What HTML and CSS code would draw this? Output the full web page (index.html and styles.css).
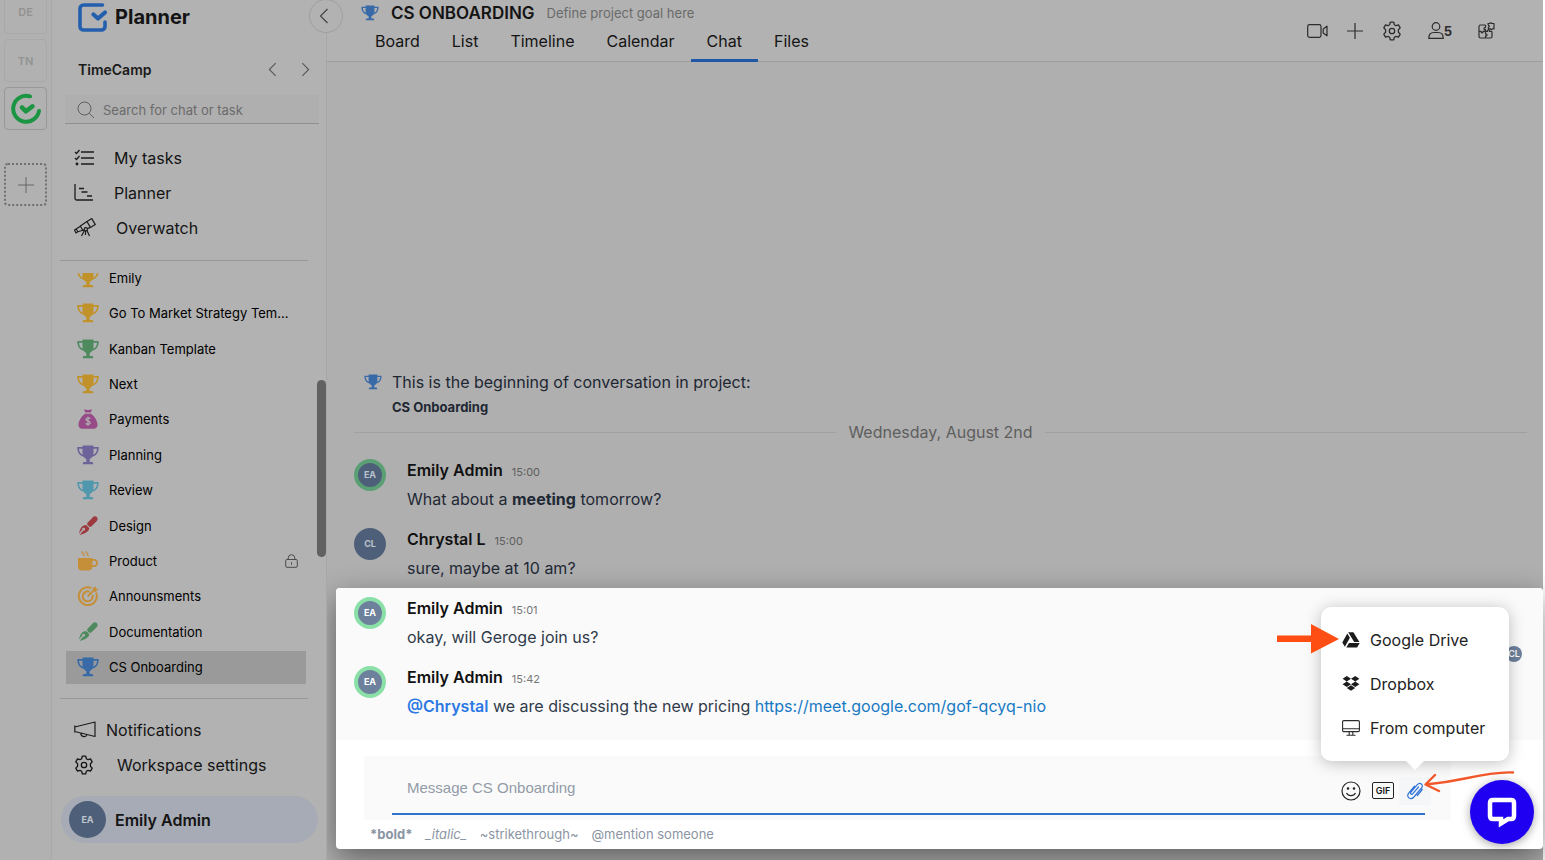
FILE: index.html
```html
<!DOCTYPE html>
<html lang="en">
<head>
  <meta charset="UTF-8" />
  <meta name="viewport" content="width=device-width, initial-scale=1.0"/>
  <title>CS Onboarding - Planner</title>
  <link rel="stylesheet" href="styles.css">
</head>
<body>

  <!-- shared icons -->
  <svg class="sprite" aria-hidden="true">
    <symbol id="trophy" viewBox="0 0 22 20">
      <path d="M5.500 .5h11v1.600h5.200c.2 5.200-2.100 8.600-6.400 9.700-.8 1.200-1.700 1.900-2.600 2.200v3h2.200c.8 0 1.300.6 1.300 1.300v.9H5.800v-.9c0-.7.500-1.300 1.300-1.300h2.200v-3c-.9-.3-1.800-1-2.600-2.200C2.400 10.700.1 7.300.3 2.100h5.200zM2 3.800c.2 2.900 1.300 4.900 3.700 5.900-.3-1.600-.3-3.500-.2-5.900zm18 0h-3.500c.1 2.400.1 4.300-.2 5.900 2.400-1 3.500-3 3.700-5.900z" fill="currentColor" fill-rule="evenodd"/>
    </symbol>
    <symbol id="brush" viewBox="0 0 20 20">
      <path d="M18.800 1.100c-1.200-1.200-2.800-.9-4 .2L9.600 6.800c-.7.800-.6 1.500 0 2.200l1.500 1.500c.7.600 1.400.7 2.200 0l5.300-5.300c1.200-1.200 1.400-2.900.2-4.100z" fill="currentColor"/>
      <path d="M8.300 8.900 11.200 12c-.2 3.200-2.300 4.800-9.600 6.900l3.600-4.400a1.400 1.400 0 1 0-.9-.9L.9 17.500C2.400 11.300 4.300 9 8.300 8.900z" fill="currentColor"/>
    </symbol>
    <symbol id="gear" viewBox="0 0 20 20">
      <path d="M8.300 1.200h3.400l.6 2.500 1.800 1 2.400-.8 1.700 3-1.800 1.800v2.600l1.800 1.800-1.700 3-2.400-.8-1.800 1-.6 2.500H8.300l-.6-2.500-1.800-1-2.400.8-1.700-3 1.800-1.800V8.700L1.800 6.900l1.700-3 2.400.8 1.800-1z" fill="none" stroke="currentColor" stroke-width="1.300" stroke-linejoin="round"/>
      <circle cx="10" cy="10" r="2.700" fill="none" stroke="currentColor" stroke-width="1.300"/>
    </symbol>
    <symbol id="chev" viewBox="0 0 10 16">
      <path d="M8.500 1 1.500 8l7 7" fill="none" stroke="currentColor" stroke-width="1.200"/>
    </symbol>
  </svg>

  <div class="rail">
    <button class="space cut">DE</button>
    <button class="space">TN</button>
    <button class="space current" aria-label="TimeCamp">
      <svg width="32" height="32" viewBox="0 0 32 32" fill="none" stroke="#1c9543" stroke-linecap="round">
        <path d="M20 3.300A13 13 0 1 0 29 18" stroke-width="4"/>
        <path d="m12 14.500 4 3.800 6.500-5" stroke-width="4.500" stroke-linejoin="round"/>
      </svg>
    </button>
    <button class="space add" aria-label="Add workspace">
      <svg width="16" height="16" viewBox="0 0 16 16" stroke="#666" fill="none"><path d="M8 0v16M0 8h16"/></svg>
    </button>
  </div>

  <aside class="sidebar">
    <div class="logo">
      <svg width="29" height="29" viewBox="0 0 29 29" fill="none" stroke="#245fae" stroke-linecap="round" stroke-linejoin="round">
        <path d="M24.500 2H5.500A3.500 3.500 0 0 0 2 5.500v18A3.500 3.500 0 0 0 5.500 27h18a3.500 3.500 0 0 0 3.500-3.500V19" stroke-width="3.600"/>
        <path d="m15.500 11.500 4.500 4 7-6" stroke-width="4.200"/>
      </svg>
      <span>Planner</span>
    </div>
    <button class="collapse" aria-label="Collapse sidebar"><svg width="10" height="16"><use href="#chev"/></svg></button>

    <div class="workspace">
      <b>TimeCamp</b>
      <button aria-label="Previous"><svg width="9" height="15"><use href="#chev"/></svg></button>
      <button class="next" aria-label="Next"><svg width="9" height="15"><use href="#chev"/></svg></button>
    </div>

    <label class="search">
      <svg width="18" height="18" viewBox="0 0 18 18" fill="none" stroke="#606060"><circle cx="7.500" cy="7.500" r="6.500"/><path d="m12.300 12.300 4.700 4.700"/></svg>
      <input type="text" placeholder="Search for chat or task" aria-label="Search for chat or task">
    </label>

    <nav class="menu">
      <a href="#"><svg width="20" height="17" viewBox="0 0 20 17" fill="none" stroke="#1c1c1c" stroke-width="1.300"><path d="M7 3h13M7 9h13M7 15h13M1 3l1.500 1.500L5.500 1M1 9l1.500 1.500L5.500 7"/><circle cx="3" cy="15" r=".8" fill="#1c1c1c"/></svg>My tasks</a>
      <a href="#"><svg width="20" height="17" viewBox="0 0 20 17" fill="none" stroke="#1c1c1c" stroke-width="1.300"><path d="M1 0v14.500Q1 16 2.500 16H19M5 4.500h5M7.500 8h6M13 12h5"/></svg>Planner</a>
      <a href="#"><svg width="22" height="19" viewBox="0 0 22 19" fill="none" stroke="#1c1c1c" stroke-width="1.200" stroke-linejoin="round"><path d="m13 3.500 4.800-2.900 3.500 6-4.900 2.800zM13 3.500 6.300 8l2.600 4.500 7.500-3.100M6.300 8.300 2.200 11l1.600 2.800 5-1.500M2.200 11l-1.700 1 1.500 3 1.800-1.200M11 11.500 7.500 18M12.500 11.500 15.500 18M11.500 12v5"/><circle cx="11.800" cy="11.300" r="1.600" fill="#b2b2b2"/></svg>Overwatch</a>
    </nav>

    <div class="projects">
      <ul>
        <li><a href="#"><svg class="c-gold"><use href="#trophy"/></svg><span>Emily</span></a></li>
        <li><a href="#"><svg class="c-gold"><use href="#trophy"/></svg><span>Go To Market Strategy Tem...</span></a></li>
        <li><a href="#"><svg class="c-green"><use href="#trophy"/></svg><span>Kanban Template</span></a></li>
        <li><a href="#"><svg class="c-gold"><use href="#trophy"/></svg><span>Next</span></a></li>
        <li><a href="#"><svg class="c-pink" viewBox="0 0 22 20"><path d="M7 .3c2.500.8 5.500.8 8 0L13.800 3.500H8.200zM8 4.800h6c3.500 2.500 6.500 7 6.500 11 0 2.500-1.500 4-4 4h-11c-2.500 0-4-1.500-4-4 0-4 3-8.500 6.500-11z" fill="currentColor"/><path d="M13.300 9.700c-1-1.200-4.500-1-4.400.8.100 1.900 4.400 1.100 4.400 3.200 0 1.900-3.600 2-4.700.6M11 7.700v9" stroke="#b2b2b2" stroke-width="1.200" fill="none"/></svg><span>Payments</span></a></li>
        <li><a href="#"><svg class="c-violet"><use href="#trophy"/></svg><span>Planning</span></a></li>
        <li><a href="#"><svg class="c-cyan"><use href="#trophy"/></svg><span>Review</span></a></li>
        <li><a href="#"><svg class="c-red"><use href="#brush"/></svg><span>Design</span></a></li>
        <li><a href="#"><svg class="c-orange" viewBox="0 0 22 20"><path d="M1 7h14.500v1H17c2.500 0 4 1.500 4 4s-1.700 4-4 4h-1.600c-.3 2-1.600 3.500-3.600 3.500H4.700C2.300 19.500 1 18 1 15.500zm14.500 2.700v4.500H17c1.300 0 2.100-.9 2.100-2.200S18.300 9.700 17 9.700z" fill="currentColor" fill-rule="evenodd"/><path d="M5 .3c0 2.500 2.200 2 2.200 5M9 .3c0 2.500 2.200 2 2.200 5" stroke="currentColor" stroke-width="1.300" fill="none"/></svg><span>Product</span>
          <svg class="lock" viewBox="0 0 13 14" fill="none" stroke="#4c4c4c"><rect x=".7" y="5.500" width="11.600" height="7.800" rx="1.200"/><path d="M3.200 5.500V4a3.300 3.300 0 0 1 6.600 0v1.500M6.500 8.300v2.400"/></svg></a></li>
        <li><a href="#"><svg class="c-orange" viewBox="0 0 22 20" fill="none" stroke="currentColor" stroke-width="2"><path d="M14.500 2A9 9 0 1 0 19 6.500M12.500 5.700A5 5 0 1 0 15.500 9M10.800 10.200l5-5"/><path d="M15.500 2.500 18.500.2l.5 2.300 2.200.5-2.500 3-3-.4z" fill="currentColor" stroke="none"/></svg><span>Announsments</span></a></li>
        <li><a href="#"><svg class="c-green"><use href="#brush"/></svg><span>Documentation</span></a></li>
        <li><a href="#" class="selected"><svg class="c-blue"><use href="#trophy"/></svg><span>CS Onboarding</span></a></li>
      </ul>
    </div>
    <div class="thumb"></div>

    <nav class="menu bottom">
      <a href="#" class="near"><svg width="22" height="17" viewBox="0 0 22 17" fill="none" stroke="#1c1c1c" stroke-width="1.200" stroke-linejoin="round"><path d="M.8 4.500v7M.8 6 21 1v14.500L.8 10.500M6.800 12c0 4.500 5.500 4.500 6 1.500"/></svg>Notifications</a>
      <a href="#" class="far"><svg width="20" height="20"><use href="#gear"/></svg>Workspace settings</a>
    </nav>

    <button class="user"><span class="face">EA</span>Emily Admin</button>
  </aside>

  <main class="main">
    <header class="header">
      <div class="heading">
        <div class="title">
          <svg class="c-blue" width="18" height="16"><use href="#trophy"/></svg>
          <h1>CS ONBOARDING</h1>
          <span>Define project goal here</span>
        </div>
        <nav class="tabs">
          <a href="#">Board</a>
          <a href="#">List</a>
          <a href="#">Timeline</a>
          <a href="#">Calendar</a>
          <a href="#" class="active">Chat</a>
          <a href="#">Files</a>
        </nav>
      </div>
      <div class="tools">
        <div class="actions">
          <button aria-label="Video call"><svg width="21" height="14" viewBox="0 0 21 14" fill="none" stroke="#2c2c2c" stroke-width="1.200" stroke-linejoin="round"><rect x=".7" y=".7" width="13.300" height="12.600" rx="1.800"/><path d="m16.200 5 3.800-2.800v9.600L16.200 9z"/></svg></button>
          <button aria-label="Add"><svg width="16" height="16" viewBox="0 0 16 16" stroke="#2c2c2c" stroke-width="1.200"><path d="M8 0v16M0 8h16"/></svg></button>
          <button aria-label="Settings"><svg width="20" height="20"><use href="#gear"/></svg></button>
        </div>
        <button class="people" aria-label="5 people"><svg width="16" height="17" viewBox="0 0 16 17" fill="none" stroke="#2c2c2c" stroke-width="1.200"><circle cx="8" cy="4.500" r="3.800"/><path d="M.8 16.300c0-4 2-5.800 5-5.800h4.400c3 0 5 1.800 5 5.800z"/></svg>5</button>
        <button aria-label="Integrations"><svg width="17" height="17" viewBox="0 0 17 17" fill="none" stroke="#2c2c2c" stroke-width="1.200" stroke-linejoin="round"><path d="M7.500 3H2.500Q1 3 1 4.500v10Q1 16 2.500 16h10q1.500 0 1.500-1.500v-5M1 9.300h2.200c-.8 2 2.500 2 1.800 0h2.500V7.500c-2 .7-2-2.400 0-1.800V3M7.500 16v-2.200c2 .7 2-2.400 0-1.800V9.300h2c-.8-1.800 2.500-1.800 1.800 0H14M10 1.500h2c-.4-1 2-1 1.600 0H16v5.300h-2c.4 1-2 1-1.600 0h-2V5c1.200.3 1.200-1.900 0-1.500z"/></svg></button>
      </div>
    </header>

    <section class="history">
      <div class="intro">
        <svg class="c-blue" width="18" height="16"><use href="#trophy"/></svg>
        <div>
          <p>This is the beginning of conversation in project:</p>
          <b>CS Onboarding</b>
        </div>
      </div>
      <div class="date">Wednesday, August 2nd</div>
      <article class="message">
        <span class="avatar online">EA</span>
        <div><h2>Emily Admin <time>15:00</time></h2><p>What about a <b>meeting</b> tomorrow?</p></div>
      </article>
      <article class="message">
        <span class="avatar">CL</span>
        <div><h2>Chrystal L <time>15:00</time></h2><p>sure, maybe at 10 am?</p></div>
      </article>
    </section>

    <section class="spotlight">
      <div class="recent">
        <article class="message">
          <span class="avatar online">EA</span>
          <div><h2>Emily Admin <time>15:01</time></h2><p>okay, will Geroge join us?</p></div>
          <span class="seen">CL</span>
        </article>
        <article class="message">
          <span class="avatar online">EA</span>
          <div><h2>Emily Admin <time>15:42</time></h2><p><b class="mention">@Chrystal</b> we are discussing the new pricing <a href="#">https://meet.google.com/gof-qcyq-nio</a></p></div>
        </article>
      </div>

      <div class="compose">
        <div class="field">
          <input type="text" placeholder="Message CS Onboarding" aria-label="Message CS Onboarding">
          <button aria-label="Emoji"><svg width="20" height="20" viewBox="0 0 20 20" fill="none" stroke="#222" stroke-width="1.200"><circle cx="10" cy="10" r="9"/><path d="M5.500 12c1.800 3.500 7.200 3.500 9 0"/><circle cx="7" cy="7.500" r=".7" fill="#222"/><circle cx="13" cy="7.500" r=".7" fill="#222"/></svg></button>
          <button aria-label="GIF"><span class="gif">GIF</span></button>
          <div class="attach">
            <button aria-label="Attach file"><svg width="17" height="19" viewBox="0 0 17 19" fill="none" stroke="#2f73d8" stroke-width="1.200" stroke-linecap="round"><path d="m11.500 6-5.600 6.600c-1.300 1.500-3.100 0-1.900-1.500l6.300-7.400c2.700-3 6.700.2 4.200 3.300l-7.600 9c-3.500 3.800-8.100-.2-5-4.100l5.600-6.700M10.300 14.500l5-6"/></svg></button>
            <div class="popup">
              <button><svg width="18" height="16" viewBox="0 0 18 16" fill="#1c1c1c"><path d="M6.200.3h5.200l6 9.600h-5.200zM5.300 1.500l2.600 4.300-5 9L.3 10.500zM7 10.900h10.700l-2.600 4.700H4.300z"/></svg>Google Drive</button>
              <button><svg width="18" height="15" viewBox="0 0 18 15" fill="#1c1c1c"><path d="m4.800 0 4.200 2.700-4.200 2.700L.6 2.700zM13.200 0l4.200 2.700-4.200 2.700L9 2.700zM4.800 5.500 9 8.200l-4.200 2.700L.6 8.200zM13.200 5.500l4.200 2.700-4.200 2.700L9 8.200zM9 9.200l4.200 2.800L9 14.800 4.800 12z"/><path d="m9 3.400 3.700 2.200L9 7.700 5.300 5.600z" fill="#fff"/></svg>Dropbox</button>
              <button><svg width="18" height="16" viewBox="0 0 18 16" fill="none" stroke="#2c2c2c" stroke-width="1.100"><rect x=".6" y=".6" width="16.800" height="11" rx="1.200"/><path d="M.6 8.800h16.800M7.200 11.600v3.600M10.800 11.600v3.600M4.500 15.300h9"/></svg>From computer</button>
              <svg class="pointer" width="62" height="30" viewBox="0 0 62 30" fill="#ff4e14"><path d="M0 11.500h34V0l28 15-28 14.500V18H0z"/></svg>
            </div>
            <svg class="sketch" width="92" height="26" viewBox="0 0 92 26" fill="none" stroke="#f2572a" stroke-width="2.400" stroke-linecap="round" stroke-linejoin="round"><path d="M89 2.500C78 2 55 5.500 41 8.500 27 11.500 12 13.500 2 14.500M11 5 1.500 14.500 15 21"/></svg>
          </div>
        </div>
      </div>
      <div class="hints"><b>*bold*</b><i>_italic_</i><span>~strikethrough~</span><span>@mention someone</span></div>
    </section>
  </main>

  <button class="widget" aria-label="Open chat">
    <svg width="32" height="32" viewBox="0 0 32 32" fill="none" stroke="#fff" stroke-width="4.500"><path d="M7 4h18c1.800 0 3 1.200 3 3v13c0 1.800-1.200 3-3 3h-3l-7 4.500V23H7c-1.800 0-3-1.200-3-3V7c0-1.800 1.200-3 3-3z"/></svg>
  </button>

</body>
</html>
```
FILE: styles.css
```css
* {
  box-sizing: border-box;
}

body {
  display: flex;
  height: 100vh;
  margin: 0;
  padding-right: 2px;
  overflow: hidden;
  font-family: Inter, "Noto Sans", sans-serif;
  font-size: 16px;
  color: #141414;
  background: #fff;
}

button, input {
  font: inherit;
  color: inherit;
  border: none;
  background: none;
  padding: 0;
}

button {
  cursor: pointer;
}

a {
  color: inherit;
  text-decoration: none;
}

p, h1, h2, ul {
  margin: 0;
  padding: 0;
}

svg {
  display: block;
  flex: none;
}

.sprite {
  position: absolute;
  width: 0;
  height: 0;
}

.c-gold { color: #c2922a; }
.c-green { color: #4f8a5f; }
.c-pink { color: #964a87; }
.c-violet { color: #6d639a; }
.c-cyan { color: #4f98ad; }
.c-red { color: #9c3a40; }
.c-orange { color: #c58f3a; }
.c-blue { color: #386aa8; }

/* workspaces */
.rail {
  flex: none;
  width: 52px;
  padding: 0 4px;
  background: #b1b1b1;
  border-right: 1px solid #a8a8a8;
}

.space {
  display: flex;
  align-items: center;
  justify-content: center;
  width: 43px;
  height: 43px;
  margin-bottom: 5px;
  border: 1px solid #a9a9a9;
  border-radius: 4px;
  font-size: 11px;
  font-weight: 600;
  color: #929292;
}

.space.cut {
  height: 34px;
  padding-bottom: 9px;
  border-top: none;
  border-radius: 0 0 4px 4px;
}

.space.current {
  border-color: #989898;
}

.space.add {
  margin-top: 33px;
  border: 2px dotted #707070;
}

/* sidebar */
.sidebar {
  position: relative;
  display: flex;
  flex-direction: column;
  flex: none;
  width: 275px;
  padding-bottom: 17px;
  background: #b2b2b2;
  border-right: 1px solid #a8a8a8;
}

.logo {
  display: flex;
  align-items: center;
  gap: 8px;
  height: 34px;
  padding-left: 26px;
  font-size: 20px;
  font-weight: 700;
}

.collapse {
  position: absolute;
  top: -1px;
  right: -17px;
  z-index: 1;
  width: 34px;
  height: 34px;
  padding-left: 9px;
  border: 1px solid #9f9f9f;
  border-radius: 50%;
  background: #b2b2b2;
  color: #444;
}

.workspace {
  display: flex;
  align-items: center;
  gap: 24px;
  height: 24px;
  margin: 23px 16px 14px 26px;
  font-size: 14px;
  color: #1a1a1a;
}

.workspace b {
  flex: 1;
  font-weight: 600;
}

.workspace button {
  color: #555;
}

.workspace .next {
  transform: scaleX(-1);
}

.search {
  display: flex;
  align-items: center;
  gap: 8px;
  height: 29px;
  margin: 0 7px 16px 13px;
  padding: 2px 0 0 12px;
  border-bottom: 1px solid #8f8f8f;
  background: #afafaf;
}

.search input {
  flex: 1;
  min-width: 0;
  font-size: 13px;
}

.search input::placeholder {
  color: #6b6b6b;
}

.menu {
  display: flex;
  flex-direction: column;
  margin: 0 18px 0 8px;
  padding-bottom: 15px;
  border-bottom: 1px solid #989898;
}

.menu a {
  display: flex;
  align-items: center;
  gap: 20px;
  height: 35px;
  padding-left: 14px;
  line-height: 20px;
}

.menu .near {
  gap: 10px;
}

.menu .far {
  gap: 23px;
}

.projects {
  display: flex;
  flex-direction: column;
  flex: 1;
  justify-content: flex-end;
  min-height: 0;
  margin: 12px 20px 0 14px;
  overflow: hidden;
}

.projects ul {
  display: grid;
  flex: none;
  grid-auto-rows: 1fr;
  height: calc(100% + 13px);
  list-style: none;
}

.projects li {
  padding: 1px 0;
}

.projects a {
  display: flex;
  align-items: center;
  gap: 10px;
  height: 100%;
  padding: 0 8px 0 11px;
  font-size: 13px;
  color: #000;
  white-space: nowrap;
}

.projects a svg {
  width: 22px;
  height: 20px;
}

.projects a .lock {
  width: 13px;
  height: 14px;
  margin-left: auto;
}

.projects .selected {
  background: #9a9a9a;
}

.thumb {
  position: absolute;
  top: 380px;
  right: 0;
  width: 9px;
  height: 177px;
  border-radius: 5px;
  background: #616161;
}

.menu.bottom {
  margin-top: 13px;
  padding: 13px 0 14px;
  border-top: 1px solid #989898;
  border-bottom: none;
}

.user {
  display: flex;
  align-items: center;
  gap: 9px;
  height: 47px;
  margin: 0 8px 0 9px;
  padding-left: 8px;
  border-radius: 24px;
  background: #a7abb5;
  font-weight: 600;
}

.face {
  width: 37px;
  height: 37px;
  border-radius: 50%;
  background: #4e6079;
  color: #c0c5cc;
  font-size: 9px;
  font-weight: 700;
  line-height: 37px;
}

/* main column */
.main {
  display: flex;
  flex-direction: column;
  flex: 1;
  min-width: 0;
  background: #afafaf;
}

.header {
  display: flex;
  justify-content: space-between;
  flex: none;
  height: 62px;
  padding: 0 48px 0 32px;
  background: #b2b2b2;
  border-bottom: 1px solid #9d9d9d;
}

.title {
  display: flex;
  align-items: center;
  gap: 12px;
  height: 25px;
  padding-left: 2px;
}

.title h1 {
  font-size: 17px;
  font-weight: 600;
}

.title span {
  font-size: 13px;
  color: #6a6a6a;
}

.tabs {
  display: flex;
  height: 37px;
}

.tabs a {
  padding: 0 16px;
  line-height: 32px;
  border-bottom: 3px solid transparent;
}

.tabs .active {
  border-color: #2058a5;
}

.tools, .actions {
  display: flex;
  align-items: center;
  color: #2c2c2c;
}

.tools {
  gap: 26px;
}

.actions {
  gap: 19px;
}

.tools .people {
  display: flex;
  align-items: center;
  font-size: 13px;
  font-weight: 700;
}

.history {
  display: flex;
  flex: 1;
  flex-direction: column;
  justify-content: flex-end;
  min-height: 0;
  padding: 0 16px 0 27px;
}

.intro {
  display: flex;
  gap: 10px;
  padding-left: 10px;
  line-height: 24px;
  color: #1e2732;
}

.intro svg {
  margin-top: 4px;
}

.intro b {
  font-size: 13px;
}

.date {
  display: flex;
  align-items: center;
  gap: 12px;
  height: 20px;
  margin: 3px 0 8px;
  color: #5e5e5e;
}

.date::before, .date::after {
  content: "";
  flex: 1;
  height: 1px;
  background: #a0a0a0;
}

.message {
  display: flex;
  gap: 21px;
  height: 69px;
  padding-top: 9px;
}

.avatar {
  flex: none;
  width: 32px;
  height: 32px;
  border: 4px solid #4e6079;
  border-radius: 50%;
  background: #4e6079;
  color: #bac2cc;
  font-size: 9px;
  font-weight: 700;
  line-height: 24px;
  text-align: center;
}

.avatar.online {
  border-color: #5b9f75;
}

.message h2 {
  font-size: 16px;
  font-weight: 600;
  line-height: 22px;
  color: #111;
}

.message time {
  margin-left: 5px;
  font-size: 11px;
  font-weight: 400;
  color: #5e5e5e;
}

.message p {
  margin-top: 4px;
  line-height: 24px;
  color: #1f2935;
}

/* lit area over the dimmed page */
.spotlight {
  flex: none;
  margin: 0 0 11px 9px;
  border-radius: 4px;
  background: #fff;
  box-shadow: 0 10px 30px rgba(0, 0, 0, 0.45);
}

.recent {
  height: 152px;
  padding: 0 21px 0 18px;
  border-radius: 4px 4px 0 0;
  background: #fafafa;
}

.recent .avatar {
  border-color: #8be0a8;
  background: #6d819c;
  color: #fff;
}

.recent time {
  color: #777;
}

.recent p {
  color: #2f3b4a;
}

.recent a {
  color: #1779c4;
}

.recent .mention {
  color: #2c78e4;
  font-weight: 600;
}

.seen {
  align-self: flex-end;
  width: 16px;
  height: 16px;
  margin: 0 0 -5px auto;
  border-radius: 50%;
  background: #6d819c;
  color: #fff;
  font-size: 9px;
  font-weight: 600;
  line-height: 16px;
  text-align: center;
}

.compose {
  margin: 16px 92px 0 28px;
  padding: 0 26px 5px 28px;
  background: #fafafa;
}

.field {
  display: flex;
  align-items: center;
  height: 59px;
  padding: 12px 0 0 15px;
  border-bottom: 2px solid #2f74cc;
}

.field input {
  flex: 1;
  min-width: 0;
  height: 32px;
  padding-bottom: 6px;
  outline: none;
  font-family: "Liberation Sans", sans-serif;
  font-size: 15px;
}

.field input::placeholder {
  color: #929ba7;
}

.field button {
  display: flex;
  align-items: center;
  justify-content: center;
  width: 32px;
  height: 28px;
}

.gif {
  width: 22px;
  border: 1px solid #222;
  border-radius: 2px;
  font-size: 9px;
  font-weight: 600;
  line-height: 15px;
}

.attach {
  position: relative;
  margin-right: -6px;
  background: #f5f6f7;
}

.attach .popup {
  position: absolute;
  right: -78px;
  bottom: 44px;
  width: 188px;
  padding: 11px 0;
  border-radius: 10px;
  background: #fff;
  box-shadow: 0 2px 16px rgba(0, 0, 0, 0.25);
}

.popup::after {
  content: "";
  position: absolute;
  top: 100%;
  left: 50%;
  margin-left: -9px;
  border: 9px solid transparent;
  border-top-color: #fff;
  border-bottom: none;
}

.popup button {
  justify-content: flex-start;
  gap: 10px;
  width: 100%;
  height: 44px;
  padding-left: 21px;
  color: #222;
}

.pointer {
  position: absolute;
  top: 17px;
  left: -44px;
}

.sketch {
  position: absolute;
  top: -7px;
  left: 25px;
}

.hints {
  display: flex;
  gap: 13px;
  height: 29px;
  padding-left: 34px;
  font-size: 13px;
  line-height: 28px;
  color: #8b95a3;
}

.widget {
  position: absolute;
  right: 11px;
  bottom: 16px;
  display: flex;
  align-items: center;
  justify-content: center;
  width: 64px;
  height: 64px;
  border-radius: 50%;
  background: #2000f0;
  box-shadow: 0 2px 10px rgba(0, 0, 0, 0.35);
}
```
